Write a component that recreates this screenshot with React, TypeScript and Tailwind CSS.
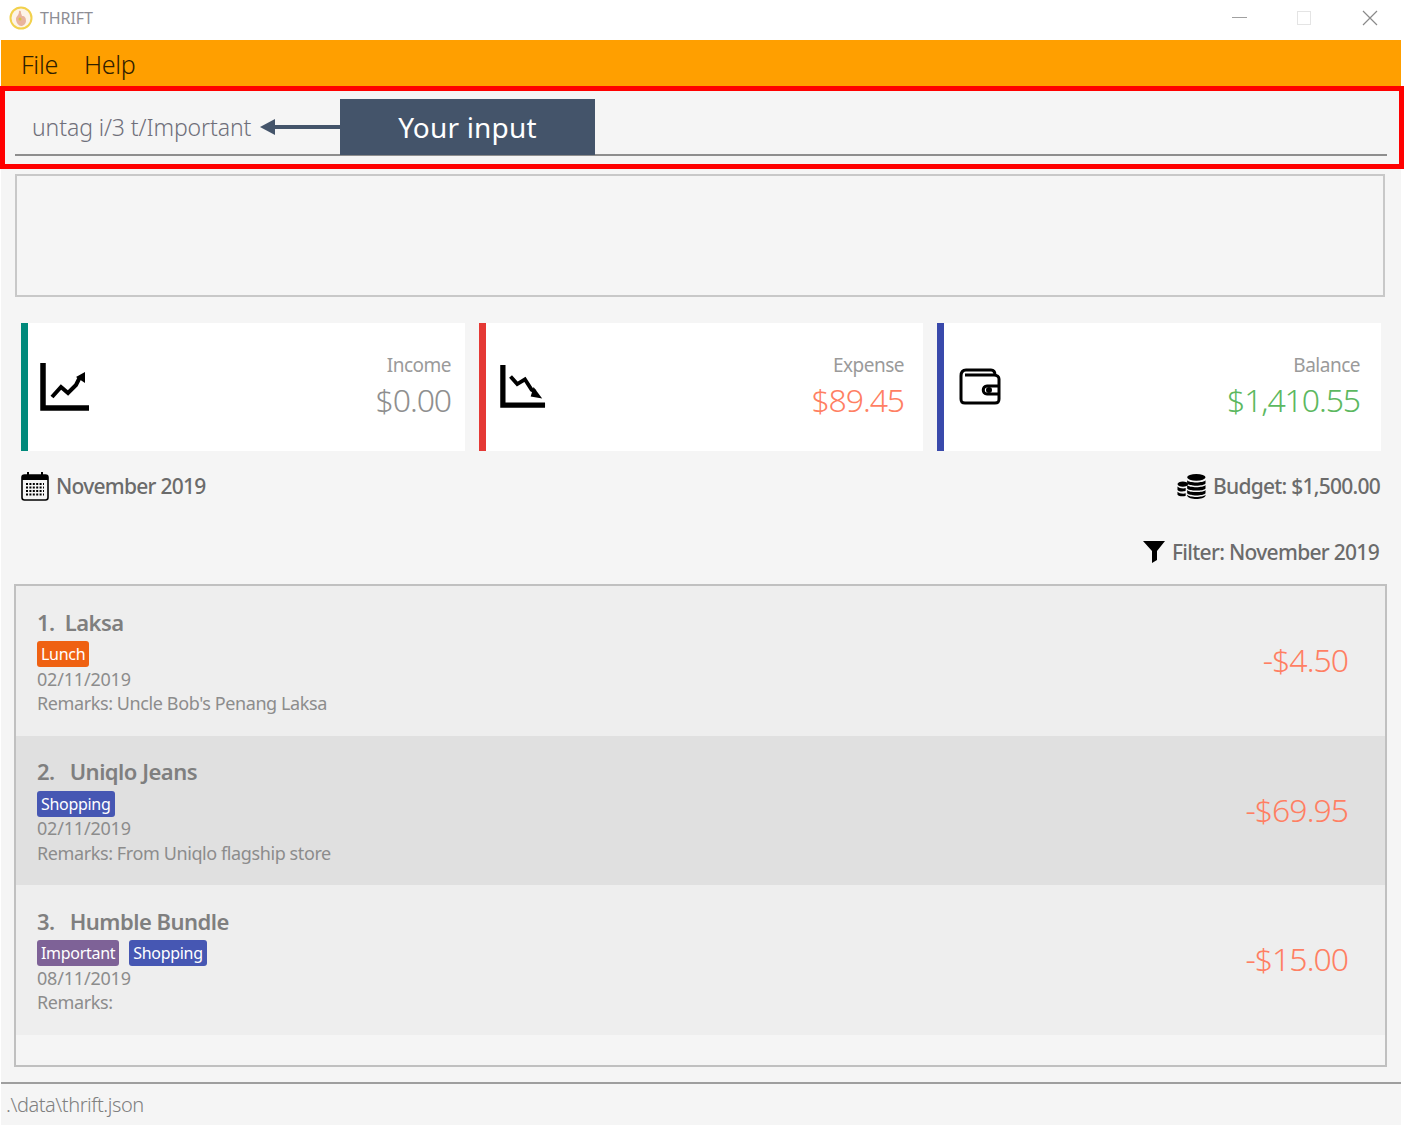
const font = { fontFamily: '"Noto Sans", "Open Sans", sans-serif' };

function Logo() {
    return (
        <svg width="24" height="24" viewBox="0 0 24 24">
            <circle cx="12" cy="12" r="10.500" fill="#fdf3e6" stroke="#f2d14c" strokeWidth="2" />
            <path d="M7 13c0-3 3-3 3-8 2-1 2 1 2 2l1 3c3 0 4 2 4 5 0 3-3 5-5 5s-5-3-5-7z" fill="#e9b39c" />
            <circle cx="11" cy="13" r="1.500" fill="#d9c33f" />
        </svg>
    );
}

function IncomeIcon() {
    return (
        <svg width="50" height="50" viewBox="0 0 50 50">
            <path d="M3 1v45h46" fill="none" stroke="#000" strokeWidth="5.500" />
            <path d="M12 35l9-10 7 6 8-8 4-8" fill="none" stroke="#000" strokeWidth="4" />
            <path d="M36 15l9-5v11z" fill="#000" />
        </svg>
    );
}

function ExpenseIcon() {
    return (
        <svg width="46" height="46" viewBox="0 0 48 48">
            <path d="M3 1v42h44" fill="none" stroke="#000" strokeWidth="5.500" />
            <path d="M11 13l7 8 8-5 7 11 4 2" fill="none" stroke="#000" strokeWidth="4" />
            <path d="M35 24l9 12-12-2z" fill="#000" />
        </svg>
    );
}

function WalletIcon() {
    return (
        <svg width="42" height="40" viewBox="0 0 42 40" fill="none" stroke="#000" strokeWidth="3">
            <path d="M2 9c0-4 2-6 5-6h25c3 0 4 2 4 5" />
            <path d="M2 9v23c0 3 1 4 4 4h30c3 0 4-1 4-4V12c0-2-2-4-5-4H6" />
            <path d="M40 19H28c-5 0-5 8 0 8h12" />
            <circle cx="30" cy="23" r="1.500" fill="#000" />
        </svg>
    );
}

function CalendarIcon() {
    return (
        <svg width="28" height="30" viewBox="0 0 28 30">
            <rect x="1" y="4" width="26" height="25" rx="2.500" fill="none" stroke="#000" strokeWidth="1.600" />
            <path d="M1 4h26v5H1z" fill="#000" />
            <path d="M7 1v5M21 1v5" stroke="#000" strokeWidth="2" />
            <path d="M5 13h18M5 16.500h18M5 20h18M5 23.500h18" stroke="#000" strokeWidth="1.800" strokeDasharray="2 1.400" />
        </svg>
    );
}

function CoinsIcon() {
    return (
        <svg width="29" height="27" viewBox="0 0 30 27" fill="#000">
            <ellipse cx="20" cy="4" rx="9.500" ry="3.500" />
            <path d="M10.500 7c2 3 17 3 19 0v3.500c-2 3-17 3-19 0zM10.500 12c2 3 17 3 19 0v3.500c-2 3-17 3-19 0zM10.500 17c2 3 17 3 19 0v3.500c-2 3-17 3-19 0zM10.500 22c2 3 17 3 19 0v1c-2 4.500-17 4.500-19 0z" />
            <ellipse cx="6" cy="11" rx="5.500" ry="2.800" />
            <path d="M.5 13.500c1.500 2 7 2.500 8.500 1.500v3c-2 1-7 1-8.500-1zM.5 19c1.500 2 7 2.500 8.500 1.500v2.500c-2 1-7 1-8.500-1z" />
        </svg>
    );
}

function FilterIcon() {
    return (
        <svg width="22" height="22" viewBox="0 0 22 22" fill="#000">
            <path d="M0 0h22l-8 10v9l-5 3V10z" />
        </svg>
    );
}

const summary = [
    { label: 'Income', value: '$0.00', bar: 'bg-[#00897b]', color: 'text-[#8f8f8f]', pad: 'pr-[14px]', iconBox: 'ml-[12px]', icon: <IncomeIcon /> },
    { label: 'Expense', value: '$89.45', bar: 'bg-[#e53935]', color: 'text-[#ff7f63]', pad: 'pr-[19px]', iconBox: 'ml-[14px]', icon: <ExpenseIcon /> },
    { label: 'Balance', value: '$1,410.55', bar: 'bg-[#3949ab]', color: 'text-[#5cb860]', pad: 'pr-[21px]', iconBox: 'ml-[15px]', icon: <WalletIcon /> },
];

const transactions = [
    { no: '1.', name: 'Laksa', gap: 'gap-[10px]', tags: [{ t: 'Lunch', c: 'bg-[#ef6112]' }], date: '02/11/2019', remarks: "Remarks: Uncle Bob's Penang Laksa", amount: '-$4.50', bg: 'bg-[#eeeeee]', h: 'h-[150px]' },
    { no: '2.', name: 'Uniqlo Jeans', gap: 'gap-[15px]', tags: [{ t: 'Shopping', c: 'bg-[#4657b3]' }], date: '02/11/2019', remarks: 'Remarks: From Uniqlo flagship store', amount: '-$69.95', bg: 'bg-[#e0e0e0]', h: 'h-[149px]' },
    { no: '3.', name: 'Humble Bundle', gap: 'gap-[15px]', tags: [{ t: 'Important', c: 'bg-[#7e6297]' }, { t: 'Shopping', c: 'bg-[#4657b3]' }], date: '08/11/2019', remarks: 'Remarks:', amount: '-$15.00', bg: 'bg-[#eeeeee]', h: 'h-[150px]' },
];

export default function App() {
    return (
        <div className="relative w-[1404px] h-[1125px] bg-white overflow-hidden" style={font}>
            {/* Title bar */}
            <div className="h-10 flex items-center pl-[9px] pr-[26px] pb-[5px]">
                <Logo />
                <span className="ml-[7px] text-[16px] text-[#8d8d94] tracking-[-0.1px]">THRIFT</span>
                <div className="ml-auto flex items-center">
                    <div className="w-[15px] h-px bg-[#a0a0a0]" />
                    <div className="ml-[50px] w-[14px] h-[14px] border border-[#e4e4e4]" />
                    <svg className="ml-[51px]" width="16" height="16" viewBox="0 0 16 16" stroke="#8a8a8a" strokeWidth="1.200">
                        <path d="M1 1l14 14M15 1L1 15" />
                    </svg>
                </div>
            </div>

            {/* Menu bar */}
            <div className="ml-px w-[1400px] h-[46px] bg-[#ff9f00] flex items-center pl-[20px] pt-[4px] gap-[26px] text-[25px] font-light tracking-[-0.3px] text-[#2f2000]">
                <span>File</span>
                <span>Help</span>
            </div>

            {/* Command box */}
            <div className="relative w-[1404px] h-[83px] border-[5px] border-[#ff0000] bg-[#f5f5f5] pl-[10px] pr-[12px]">
                <div className="h-[65px] border-b-2 border-[#8e8e8e] flex items-center pl-[17px] pt-[9px] text-[23px] font-light tracking-[-0.1px] text-[#6f6f7a]">
                    untag i/3 t/Important
                </div>
                <div className="absolute left-[255px] top-[28px] flex items-center">
                    <div className="w-0 h-0 border-y-[8px] border-y-transparent border-r-[15px] border-r-[#44546a]" />
                    <div className="w-[66px] h-[4px] bg-[#44546a]" />
                </div>
                <div className="absolute left-[335px] top-[8px] w-[255px] h-[56px] bg-[#44546a] flex items-center justify-center text-[28px] tracking-[0.2px] text-white">
                    Your input
                </div>
            </div>

            {/* Everything below the command box */}
            <div className="ml-px w-[1400px] h-[956px] bg-[#f5f5f5] flex flex-col">
                <div className="ml-[14px] mt-[5px] w-[1370px] h-[123px] border-2 border-[#c8c8c8]" />

                <div className="ml-[20px] mt-[26px] w-[1360px] flex gap-[14px]">
                    {summary.map((s) => (
                        <div key={s.label} className="w-[444px] h-[128px] bg-white flex items-center">
                            <div className={`w-[7px] h-full ${s.bar}`} />
                            <div className={`${s.iconBox} w-[50px] flex items-center`}>{s.icon}</div>
                            <div className={`ml-auto ${s.pad} text-right`}>
                                <div className="text-[19px] leading-[26px] tracking-[-0.5px] text-[#9a9a9a]">{s.label}</div>
                                <div className={`text-[32px] font-light leading-[44px] tracking-[-1.1px] ${s.color}`}>{s.value}</div>
                            </div>
                        </div>
                    ))}
                </div>

                <div className="ml-[20px] mt-[20px] w-[1359px] h-[30px] flex items-center justify-between text-[21px] font-medium tracking-[-0.75px] text-[#6b6b6b]">
                    <div className="flex items-center gap-[7px]">
                        <CalendarIcon />
                        <span className="pt-[2px]">November 2019</span>
                    </div>
                    <div className="flex items-center gap-[7px]">
                        <CoinsIcon />
                        <span className="pt-[2px]">Budget: $1,500.00</span>
                    </div>
                </div>

                <div className="mt-[36px] w-[1378px] h-[30px] flex items-center justify-end gap-[7px] text-[21px] font-medium tracking-[-0.7px] text-[#6b6b6b]">
                    <FilterIcon />
                    <span className="pt-[2px]">Filter: November 2019</span>
                </div>

                <div className="ml-[13px] mt-[17px] w-[1373px] h-[483px] border-2 border-[#c0c0c0]">
                    {transactions.map((t) => (
                        <div key={t.no} className={`${t.bg} ${t.h} flex items-center pl-[21px] pr-[37px]`}>
                            <div className="mt-[1px]">
                                <div className={`h-[30px] flex items-center ${t.gap} text-[22px] font-semibold tracking-[-0.5px] text-[#7f7f7f]`}>
                                    <span>{t.no}</span>
                                    <span>{t.name}</span>
                                </div>
                                <div className="mt-[4px] flex gap-[10px]">
                                    {t.tags.map((tag) => (
                                        <span key={tag.t} className={`${tag.c} h-[26px] rounded-[3px] px-[4px] flex items-center text-[16px] tracking-[-0.3px] text-white`}>
                                            {tag.t}
                                        </span>
                                    ))}
                                </div>
                                <div className="h-[24px] flex items-center text-[18px] tracking-[-0.2px] text-[#8c8c8c]">{t.date}</div>
                                <div className="h-[25px] flex items-center text-[18px] tracking-[-0.4px] text-[#8c8c8c]">{t.remarks}</div>
                            </div>
                            <div className="ml-auto pb-[2px] text-[32px] font-light tracking-[-1px] text-[#ff7f63]">{t.amount}</div>
                        </div>
                    ))}
                </div>

                <div className="mt-[15px] h-[43px] border-t-2 border-[#9e9e9e] flex items-center pl-[5px] text-[20px] font-light tracking-[-0.45px] text-[#808080]">
                    .\data\thrift.json
                </div>
            </div>
        </div>
    );
}
